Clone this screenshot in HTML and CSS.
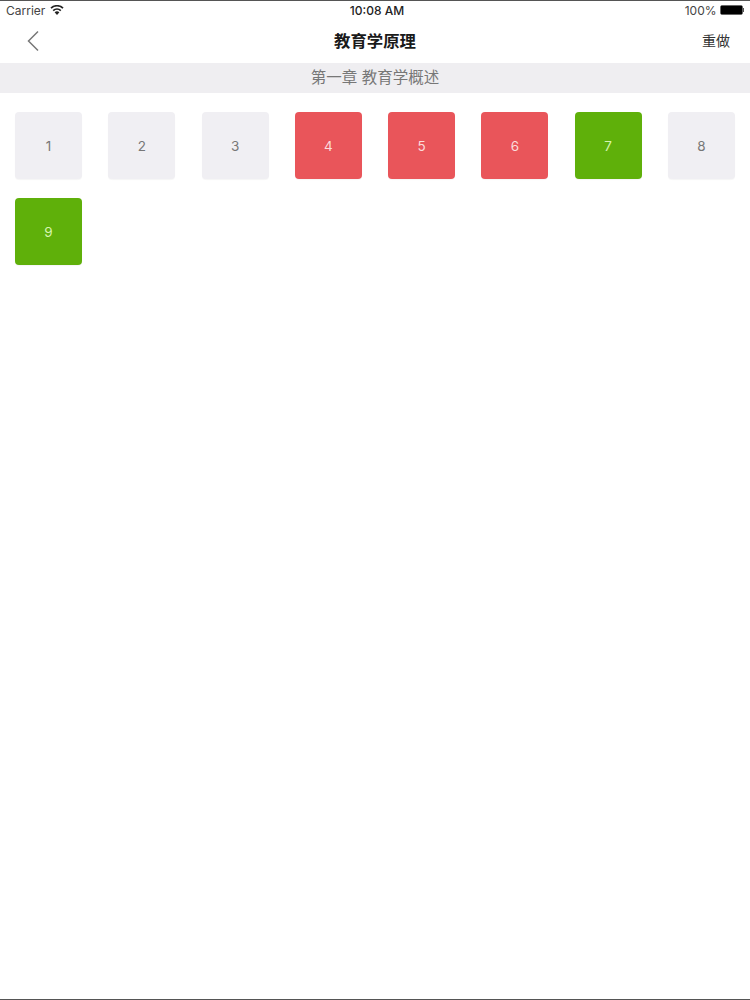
FILE: index.html
```html
<!DOCTYPE html>
<html lang="zh">
<head>
  <meta charset="UTF-8" />
  <meta name="viewport" content="width=device-width, initial-scale=1.0"/>
  <title>教育学原理</title>
  <link rel="stylesheet" href="styles.css">
</head>
<body>
  <div class="statusBar">
    <div class="statusLeft">
      <span>Carrier</span>
      <svg class="wifi" width="14" height="10" viewBox="0 0 14 10">
        <path d="M7 10 L4.6 7.2 A3.6 3.6 0 0 1 9.4 7.2 Z" fill="#222"/>
        <path d="M3.2 5.6 A5.6 5.6 0 0 1 10.8 5.6" fill="none" stroke="#222" stroke-width="1.7"/>
        <path d="M1 3.2 A8.6 8.6 0 0 1 13 3.2" fill="none" stroke="#222" stroke-width="1.7"/>
      </svg>
    </div>
    <div class="statusTime">10:08 AM</div>
    <div class="statusRight">
      <span>100%</span>
      <div class="battery"><div class="batteryFill"></div></div>
      <div class="batteryTip"></div>
    </div>
  </div>

  <div class="navBar">
    <svg class="back" width="14" height="22" viewBox="0 0 14 22">
      <path d="M12 1.5 L2.5 11 L12 20.5" fill="none" stroke="#777" stroke-width="1.5"/>
    </svg>
    <div class="navTitle">教育学原理</div>
    <div class="navAction">重做</div>
  </div>

  <div class="chapter">第一章 教育学概述</div>

  <div class="tiles">
    <div class="tile">1</div>
    <div class="tile">2</div>
    <div class="tile">3</div>
    <div class="tile wrong">4</div>
    <div class="tile wrong">5</div>
    <div class="tile wrong">6</div>
    <div class="tile correct">7</div>
    <div class="tile">8</div>
    <div class="tile correct">9</div>
  </div>
</body>
</html>
```

FILE: styles.css
```css
* {
  box-sizing: border-box;
}

html, body {
  height: 100%;
}

body {
  margin: 0;
  height: 1000px;
  overflow: hidden;
  background: #fff;
  color: #222;
  font-family: Inter, "Noto Sans CJK SC", sans-serif;
  border-top: 1px solid #555;
  border-bottom: 1px solid #555;
}

.statusBar {
  display: grid;
  grid-template-columns: 1fr auto 1fr;
  align-items: center;
  height: 20px;
  padding: 0 6px 2px;
  font-size: 12px;
  color: #444;
}

.statusLeft {
  display: flex;
  align-items: center;
  gap: 5px;
}

.statusTime {
  margin-left: 4px;
  font-size: 12px;
  font-weight: 500;
  color: #222;
}

.statusRight {
  display: flex;
  align-items: center;
  justify-content: flex-end;
}

.battery {
  width: 23px;
  height: 10px;
  margin-left: 3px;
  border: 1px solid #666;
  border-radius: 2px;
}

.batteryFill {
  height: 100%;
  background: #000;
}

.batteryTip {
  width: 1.5px;
  height: 4px;
  background: #555;
}

.navBar {
  display: grid;
  grid-template-columns: 1fr auto 1fr;
  align-items: center;
  height: 42px;
  padding: 0 20px 2px;
}

.back {
  margin-left: 6px;
}

.navTitle {
  font-size: 16.4px;
  font-weight: bold;
  line-height: 20px;
  color: #1a1a1a;
}

.navAction {
  justify-self: end;
  font-size: 14px;
  line-height: 20px;
  color: #333;
}

.chapter {
  height: 30px;
  line-height: 29px;
  text-align: center;
  background: #efeef1;
  font-size: 15.5px;
  color: #777;
}

.tiles {
  display: grid;
  grid-template-columns: repeat(8, 67px);
  grid-auto-rows: 67px;
  justify-content: space-between;
  row-gap: 19px;
  padding: 19px 15px 0;
}

.tile {
  display: flex;
  align-items: center;
  justify-content: center;
  background: #f0eff3;
  border-radius: 4px;
  box-shadow: 0 1px 1px rgba(0, 0, 0, 0.04);
  font-size: 13.5px;
  color: #777;
}

.tile.wrong {
  background: #e9555a;
  color: #fbdcdc;
}

.tile.correct {
  background: #5fb00a;
  color: #d6f5b0;
}
```
